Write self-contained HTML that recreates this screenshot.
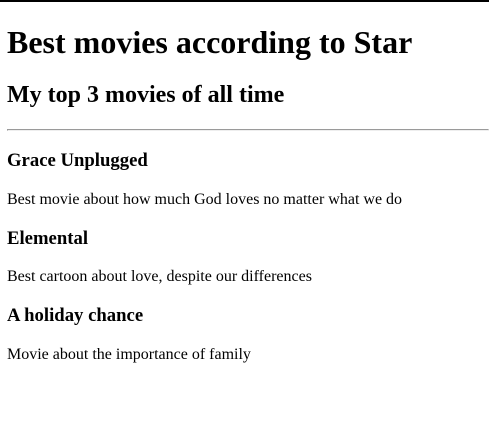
<!DOCTYPE html>
<html><head><style>
body{margin:0 0 8px 7px;padding-top:5px;font-family:"Liberation Serif",serif;background:#fff;color:#000}
.bar{position:absolute;top:0;left:0;width:489px;height:2px;background:#000}
h1{margin-top:19px}
p{font-size:16px}
</style></head><body>
<div class="bar"></div>
<h1>Best movies according to Star</h1>
<h2>My top 3 movies of all time</h2>
<hr>
<h3>Grace Unplugged</h3>
<p>Best movie about how much God loves no matter what we do</p>
<h3>Elemental</h3>
<p>Best cartoon about love, despite our differences</p>
<h3>A holiday chance</h3>
<p>Movie about the importance of family</p>
</body></html>
